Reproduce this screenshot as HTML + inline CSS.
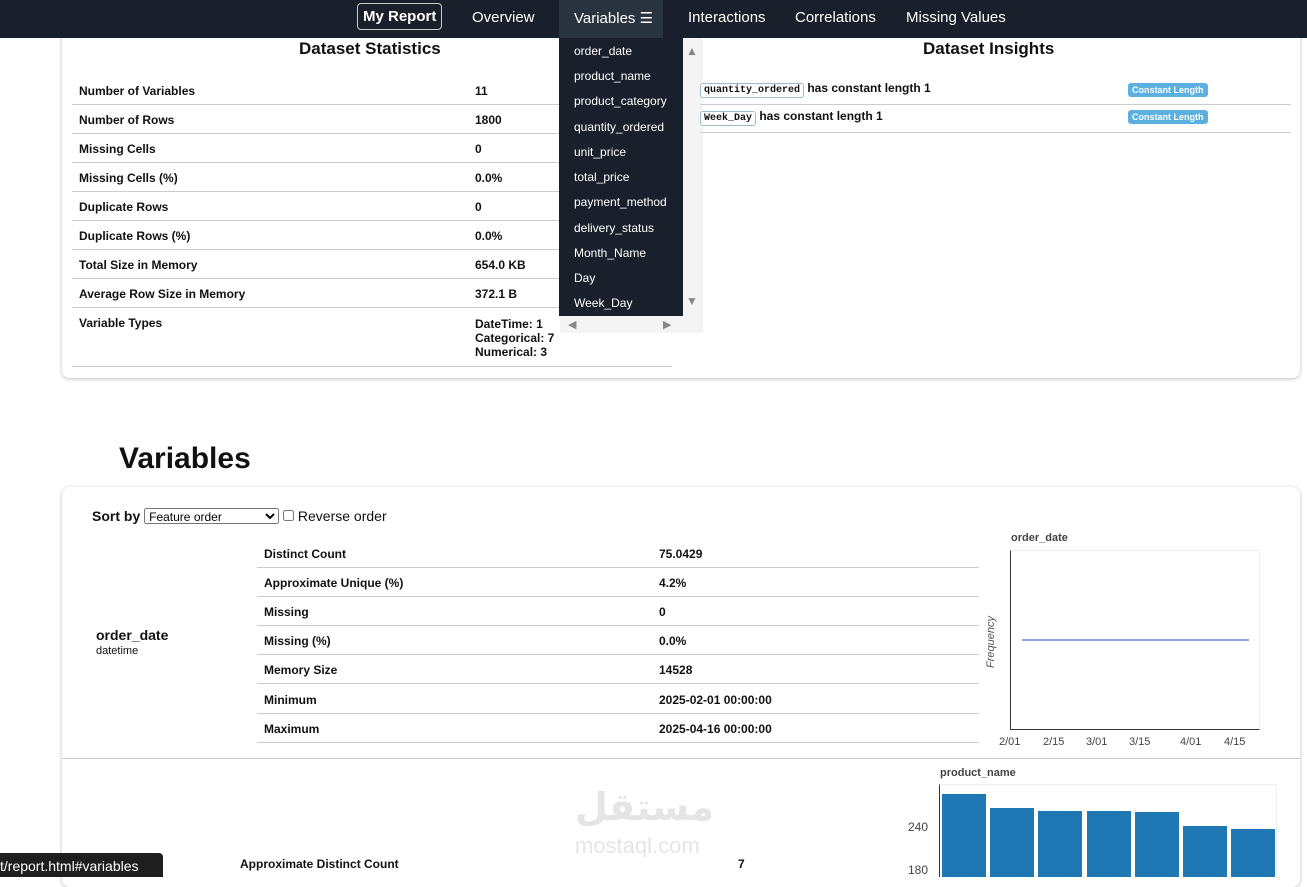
<!DOCTYPE html>
<html><head><meta charset="utf-8"><style>
*{box-sizing:border-box;margin:0;padding:0}
body{width:1307px;height:877px;overflow:hidden;background:#fff;font-family:"Liberation Sans",Arial,sans-serif;color:#111;position:relative}
.a{position:absolute}
.nav{left:0;top:0;width:1307px;height:38px;background:#19202b}
.nav span{position:absolute;top:9px;color:#fff;font-size:15px}
.card{background:#fff;border-radius:8px;box-shadow:0 1px 4px rgba(0,0,0,.25)}
.row{position:absolute;left:72px;width:600px;height:29px;border-bottom:1px solid #ccc;font-size:12px;font-weight:bold}
.row b{position:absolute;left:7px;top:8px}
.row i{position:absolute;left:403px;top:8px;font-style:normal}
.r2{position:absolute;left:257px;width:722px;height:29px;border-bottom:1px solid #ccc;font-size:12px;font-weight:bold}
.r2 b{position:absolute;left:7px;top:8px}
.r2 i{position:absolute;left:402px;top:8px;font-style:normal}
.dd{left:559px;top:38px;width:124px;height:278px;background:#19202b}
.dd div{position:absolute;left:15px;color:#fff;font-size:12px}
.code{font-family:"Liberation Mono",monospace;font-size:9px;border:1px solid #9bc;border-radius:3px;padding:1px 3px;background:#fff}
.badge{background:#5bb0e0;color:#fff;font-size:9px;font-weight:bold;border-radius:3px;padding:2px 4px}
.bar{position:absolute;background:#1f77b4;width:44px;bottom:0}
.xl{position:absolute;top:736px;font-size:11px;color:#444}
</style></head><body>
<div class="a card" style="left:62px;top:20px;width:1238px;height:358px"></div>
<div class="a" style="left:299px;top:39px;font-size:17px;font-weight:bold">Dataset Statistics</div>
<div class="a" style="left:923px;top:39px;font-size:17px;font-weight:bold">Dataset Insights</div>
<div class="row" style="top:76px"><b>Number of Variables</b><i>11</i></div>
<div class="row" style="top:105px"><b>Number of Rows</b><i>1800</i></div>
<div class="row" style="top:134px"><b>Missing Cells</b><i>0</i></div>
<div class="row" style="top:163px"><b>Missing Cells (%)</b><i>0.0%</i></div>
<div class="row" style="top:192px"><b>Duplicate Rows</b><i>0</i></div>
<div class="row" style="top:221px"><b>Duplicate Rows (%)</b><i>0.0%</i></div>
<div class="row" style="top:250px"><b>Total Size in Memory</b><i>654.0 KB</i></div>
<div class="row" style="top:279px"><b>Average Row Size in Memory</b><i>372.1 B</i></div>
<div class="row" style="top:308px;height:59px"><b>Variable Types</b><i style="top:9px;line-height:14px">DateTime: 1<br>Categorical: 7<br>Numerical: 3</i></div>
<div class="a" style="left:683px;top:38px;width:20px;height:295px;background:#f4f4f4"></div>
<div class="a" style="left:560px;top:316px;width:143px;height:17px;background:#f4f4f4"></div>
<div class="a" style="left:686px;top:44px;font-size:12px;color:#888">▲</div>
<div class="a" style="left:686px;top:294px;font-size:12px;color:#888">▼</div>
<div class="a" style="left:568px;top:318px;font-size:11px;color:#888">◀</div>
<div class="a" style="left:663px;top:318px;font-size:11px;color:#888">▶</div>
<div class="a" style="left:700px;top:81px;width:591px;height:24px;border-bottom:1px solid #ccc;font-size:12px;font-weight:bold"><span class="code" style="font-size:10px">quantity_ordered</span> has constant length 1<span class="badge a" style="left:428px;top:2px">Constant Length</span></div>
<div class="a" style="left:700px;top:109px;width:591px;height:24px;border-bottom:1px solid #ccc;font-size:12px;font-weight:bold"><span class="code" style="font-size:10px">Week_Day</span> has constant length 1<span class="badge a" style="left:428px;top:1px">Constant Length</span></div>

<div class="a nav">
<span style="left:357px;top:3px;border:1px solid #ccc;border-radius:4px;padding:4px 5px;font-weight:bold">My Report</span>
<span style="left:472px">Overview</span>
<div class="a" style="left:559px;top:0;width:104px;height:38px;background:#2a3441"></div>
<span style="left:574px">Variables ☰</span>
<span style="left:688px">Interactions</span>
<span style="left:795px">Correlations</span>
<span style="left:906px">Missing Values</span>
</div>
<div class="a dd">
<div style="top:6px">order_date</div><div style="top:31px">product_name</div><div style="top:56px">product_category</div><div style="top:82px">quantity_ordered</div><div style="top:107px">unit_price</div><div style="top:132px">total_price</div><div style="top:157px">payment_method</div><div style="top:183px">delivery_status</div><div style="top:208px">Month_Name</div><div style="top:233px">Day</div><div style="top:258px">Week_Day</div>
</div>

<div class="a" style="left:119px;top:442px;font-size:30px;font-weight:bold">Variables</div>
<div class="a card" style="left:62px;top:487px;width:1238px;height:400px"></div>
<div class="a" style="left:92px;top:508px;font-size:14px"><b>Sort by</b> <select style="font-size:12px;width:135px;height:16px"><option>Feature order</option></select> <input type="checkbox" style="width:11px;height:11px"> Reverse order</div>
<div class="a" style="left:96px;top:627px;font-size:14px;font-weight:bold">order_date</div>
<div class="a" style="left:96px;top:645px;font-size:11px">datetime</div>
<div class="r2" style="top:539px"><b>Distinct Count</b><i>75.0429</i></div>
<div class="r2" style="top:568px"><b>Approximate Unique (%)</b><i>4.2%</i></div>
<div class="r2" style="top:597px"><b>Missing</b><i>0</i></div>
<div class="r2" style="top:626px"><b>Missing (%)</b><i>0.0%</i></div>
<div class="r2" style="top:655px"><b>Memory Size</b><i>14528</i></div>
<div class="r2" style="top:685px"><b>Minimum</b><i>2025-02-01 00:00:00</i></div>
<div class="r2" style="top:714px"><b>Maximum</b><i>2025-04-16 00:00:00</i></div>
<div class="a" style="left:1011px;top:532px;font-size:11px;font-weight:bold;color:#444">order_date</div>
<div class="a" style="left:1010px;top:550px;width:250px;height:180px;border:1px solid #eee;border-left:1px solid #333;border-bottom:1px solid #333"></div>
<div class="a" style="left:1022px;top:639px;width:227px;height:2px;background:#8fa8e8"></div>
<div class="a" style="left:985px;top:668px;font-size:11px;color:#555;transform:rotate(-90deg);transform-origin:left top;font-style:italic">Frequency</div>
<div class="xl" style="left:999px">2/01</div><div class="xl" style="left:1043px">2/15</div><div class="xl" style="left:1086px">3/01</div><div class="xl" style="left:1129px">3/15</div><div class="xl" style="left:1180px">4/01</div><div class="xl" style="left:1224px">4/15</div>
<div class="a" style="left:62px;top:758px;width:1238px;height:1px;background:#ccc"></div>
<div class="a" style="left:940px;top:767px;font-size:11px;font-weight:bold;color:#444">product_name</div>
<div class="a" style="left:939px;top:784px;width:338px;height:93px;border:1px solid #eee;border-left:1px solid #333;border-bottom:none;overflow:hidden">
<div class="bar" style="left:2px;height:83px"></div><div class="bar" style="left:50px;height:69px"></div><div class="bar" style="left:98px;height:66px"></div><div class="bar" style="left:147px;height:66px"></div><div class="bar" style="left:195px;height:65px"></div><div class="bar" style="left:243px;height:51px"></div><div class="bar" style="left:291px;height:48px"></div>
</div>
<div class="a" style="left:908px;top:820px;font-size:12px;color:#444">240</div>
<div class="a" style="left:908px;top:863px;font-size:12px;color:#444">180</div>
<div class="a" style="left:575px;top:785px;font-size:38px;font-weight:bold;color:#e5e5e5;font-family:'DejaVu Sans',sans-serif">مستقل</div>
<div class="a" style="left:575px;top:833px;font-size:22px;color:#e5e5e5">mostaql.com</div>
<div class="a" style="left:240px;top:857px;font-size:12px;font-weight:bold">Approximate Distinct Count</div>
<div class="a" style="left:738px;top:857px;font-size:12px;font-weight:bold">7</div>
<div class="a" style="left:0;top:853px;width:163px;height:24px;background:#1e1e1e;border-radius:0 4px 0 0;color:#fff;font-size:14px;padding:5px 0 0 0">t/report.html#variables</div>
</body></html>
